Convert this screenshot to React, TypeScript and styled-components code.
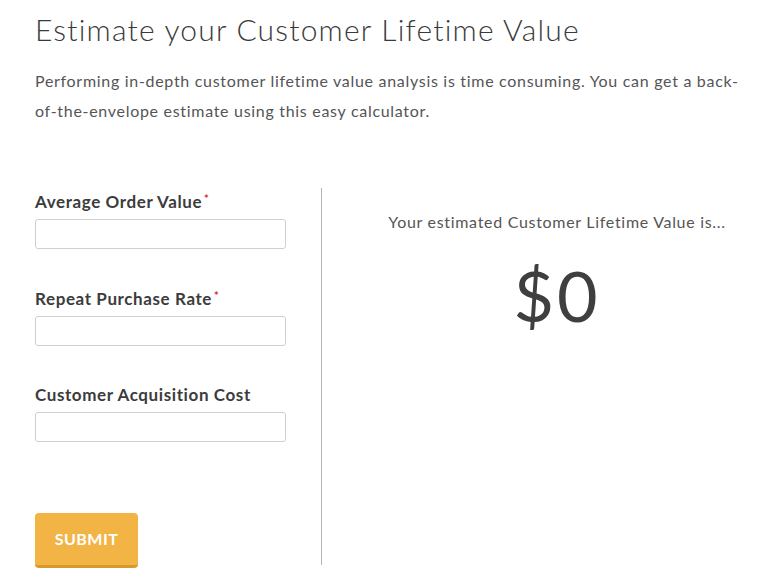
import React from "react";
import styled, { createGlobalStyle } from "styled-components";

const Global = createGlobalStyle`
  html, body { margin: 0; padding: 0; background: #fff; }
  body { font-family: Lato, "Open Sans", Arial, sans-serif; color: #444; }
  * { box-sizing: border-box; }
`;

const Page = styled.div`
  width: 765px;
  height: 580px;
  padding: 10px 20px 0 35px;
  overflow: hidden;
`;

const Title = styled.h1`
  margin: 0;
  font-size: 30px;
  font-weight: 300;
  color: #3a3a3a;
  line-height: 38px;
  letter-spacing: 1.2px;
`;

const Intro = styled.p`
  margin: 18px 0 0;
  font-size: 16px;
  font-weight: 400;
  line-height: 30px;
  color: #555;
  width: 715px;
  letter-spacing: 0.7px;
`;

const Columns = styled.div`
  display: grid;
  grid-template-columns: 287px 1fr;
  margin-top: 62px;
`;

const FormCol = styled.div`
  display: flex;
  flex-direction: column;
  border-right: 1px solid #b5b5b5;
  padding-top: 3px;
  height: 377px;
`;

const Field = styled.div`
  display: flex;
  flex-direction: column;
  margin-bottom: 38.5px;
`;

const Label = styled.label`
  font-size: 17px;
  font-weight: 700;
  color: #3c3c3c;
  line-height: 22px;
  margin-bottom: 6px;
  letter-spacing: 0.6px;
`;

const Req = styled.sup`
  color: #d9262c;
  font-size: 11px;
  margin-left: 2px;
  vertical-align: 5px;
  line-height: 0;
`;

const Input = styled.input`
  width: 251px;
  height: 30px;
  border: 1px solid #cfcfcf;
  border-radius: 3px;
  background: #fff;
  font-family: inherit;
`;

const Submit = styled.button`
  margin-top: 32px;
  width: 103px;
  height: 55px;
  border: none;
  border-bottom: 3px solid #d99a2c;
  border-radius: 4px;
  background: #f2b445;
  color: #fff;
  font-family: inherit;
  font-size: 16px;
  font-weight: 700;
  letter-spacing: 0.5px;
  padding: 0;
`;

const Result = styled.div`
  display: flex;
  flex-direction: column;
  align-items: center;
  padding: 23px 0 0 47px;
`;

const ResultText = styled.div`
  font-size: 16px;
  color: #555;
  line-height: 22px;
  letter-spacing: 0.7px;
`;

const Amount = styled.div`
  margin-top: 22px;
  font-size: 70px;
  font-weight: 400;
  color: #3f3f3f;
  line-height: 80px;
  letter-spacing: 3px;
`;

export default function App() {
  return (
    <Page>
      <Global />
      <Title>Estimate your Customer Lifetime Value</Title>
      <Intro>
        Performing in-depth customer lifetime value analysis is time consuming. You can get a back-of-the-envelope
        estimate using this easy calculator.
      </Intro>
      <Columns>
        <FormCol>
          <Field>
            <Label>
              Average Order Value<Req>*</Req>
            </Label>
            <Input type="text" />
          </Field>
          <Field>
            <Label>
              Repeat Purchase Rate<Req>*</Req>
            </Label>
            <Input type="text" />
          </Field>
          <Field>
            <Label>Customer Acquisition Cost</Label>
            <Input type="text" />
          </Field>
          <div>
            <Submit type="button">SUBMIT</Submit>
          </div>
        </FormCol>
        <Result>
          <ResultText>Your estimated Customer Lifetime Value is...</ResultText>
          <Amount>$0</Amount>
        </Result>
      </Columns>
    </Page>
  );
}
